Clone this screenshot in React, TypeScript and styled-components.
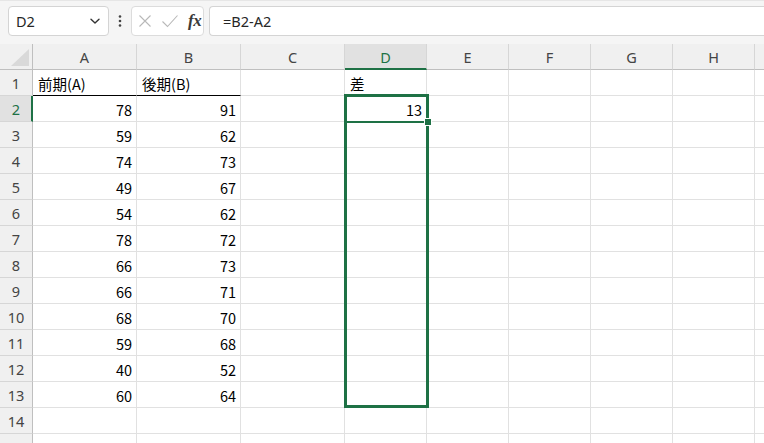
import React from "react";
import styled, { createGlobalStyle } from "styled-components";

const GREEN = "#1e7145";

const GlobalStyle = createGlobalStyle`
  html, body {
    margin: 0;
    padding: 0;
    background: #ffffff;
    overflow: hidden;
  }
  body {
    font-family: "Noto Sans", "Noto Sans CJK JP", sans-serif;
  }
`;

const columns = [
  { name: "A", width: 104 },
  { name: "B", width: 104 },
  { name: "C", width: 104 },
  { name: "D", width: 82 },
  { name: "E", width: 82 },
  { name: "F", width: 82 },
  { name: "G", width: 82 },
  { name: "H", width: 82 },
  { name: "", width: 40 },
];

const data: [string, string][] = [
  ["78", "91"],
  ["59", "62"],
  ["74", "73"],
  ["49", "67"],
  ["54", "62"],
  ["78", "72"],
  ["66", "73"],
  ["66", "71"],
  ["68", "70"],
  ["59", "68"],
  ["40", "52"],
  ["60", "64"],
];

const Page = styled.div`
  width: 764px;
  height: 443px;
  overflow: hidden;
  display: flex;
  flex-direction: column;
`;

const Toolbar = styled.div`
  height: 44px;
  box-sizing: border-box;
  background: #f5f5f5;
  border-top: 1px solid #e6e6e6;
  display: flex;
  align-items: flex-start;
  padding: 5px 0 0 8px;
  gap: 0;
`;

const NameBox = styled.div`
  width: 101px;
  height: 30px;
  box-sizing: border-box;
  background: #fff;
  border: 1px solid #d4d4d4;
  border-radius: 4px;
  display: flex;
  align-items: center;
  justify-content: space-between;
  padding: 0 6px 0 7px;
  font-size: 14.5px;
  color: #262626;
`;

const Dots = styled.div`
  width: 22px;
  height: 30px;
  display: flex;
  align-items: center;
  justify-content: center;
`;

const FuncBox = styled.div`
  width: 73px;
  height: 30px;
  box-sizing: border-box;
  background: #fff;
  border: 1px solid #dcdcdc;
  border-radius: 4px;
  display: flex;
  align-items: center;
  padding: 0 0 0 5px;
  gap: 8px;
`;

const Fx = styled.span`
  font-family: "Liberation Serif", "DejaVu Serif", serif;
  font-style: italic;
  font-weight: bold;
  font-size: 17px;
  color: #3a3a3a;
  margin-left: 1px;
  letter-spacing: -0.5px;
`;

const FormulaBar = styled.div`
  flex: 1;
  height: 30px;
  box-sizing: border-box;
  margin-left: 5px;
  background: #fff;
  border: 1px solid #d4d4d4;
  border-right: none;
  border-radius: 4px 0 0 4px;
  display: flex;
  align-items: center;
  padding-left: 13px;
  font-size: 14.5px;
  color: #262626;
`;

const Sheet = styled.div`
  position: relative;
  flex: 1;
  overflow: hidden;
  display: grid;
  grid-template-columns: 33px ${columns.map((c) => c.width + "px").join(" ")};
  grid-template-rows: 26px;
  grid-auto-rows: 26px;
`;

const Corner = styled.div`
  position: relative;
  background: #f0f0f0;
  box-sizing: border-box;
  border-right: 1px solid #bfbfbf;
  border-bottom: 1px solid #bfbfbf;
  &::after {
    content: "";
    position: absolute;
    right: 3px;
    bottom: 3px;
    width: 0;
    height: 0;
    border-left: 18px solid transparent;
    border-bottom: 17px solid #d9d9d9;
  }
`;

const ColHead = styled.div<{ $active?: boolean }>`
  background: ${(p) => (p.$active ? "#e1e1e1" : "#f0f0f0")};
  box-sizing: border-box;
  border-right: 1px solid #d6d6d6;
  border-bottom: ${(p) => (p.$active ? `2px solid ${GREEN}` : "1px solid #bfbfbf")};
  display: flex;
  align-items: center;
  justify-content: center;
  font-size: 14.5px;
  color: ${(p) => (p.$active ? GREEN : "#444")};
  padding-top: ${(p) => (p.$active ? "1px" : "0")};
`;

const RowHead = styled.div<{ $active?: boolean }>`
  background: ${(p) => (p.$active ? "#e1e1e1" : "#f0f0f0")};
  box-sizing: border-box;
  border-right: ${(p) => (p.$active ? `2px solid ${GREEN}` : "1px solid #bfbfbf")};
  border-bottom: 1px solid #d6d6d6;
  display: flex;
  align-items: center;
  justify-content: center;
  font-size: 14.5px;
  color: ${(p) => (p.$active ? GREEN : "#444")};
  padding-left: ${(p) => (p.$active ? "1px" : "0")};
`;

const Cell = styled.div<{ $right?: boolean; $underline?: boolean }>`
  box-sizing: border-box;
  border-right: 1px solid #e1e1e1;
  border-bottom: 1px solid ${(p) => (p.$underline ? "#000" : "#e1e1e1")};
  display: flex;
  align-items: center;
  justify-content: ${(p) => (p.$right ? "flex-end" : "flex-start")};
  padding: 1px 4px 0 5px;
  font-family: "Noto Sans CJK JP", "Noto Sans", sans-serif;
  font-size: 14.5px;
  color: #000;
  white-space: nowrap;
`;

const Selection = styled.div`
  position: absolute;
  left: 344px;
  top: 50px;
  width: 85px;
  height: 314px;
  box-sizing: border-box;
  border: 3px solid ${GREEN};
  pointer-events: none;
`;

const ActiveLine = styled.div`
  position: absolute;
  left: 344px;
  top: 77px;
  width: 85px;
  height: 2px;
  background: ${GREEN};
`;

const FillHandle = styled.div`
  position: absolute;
  left: 424px;
  top: 74px;
  width: 6px;
  height: 6px;
  background: ${GREEN};
  border: 1px solid #fff;
`;

const ChevronDown = () => (
  <svg width="14" height="14" viewBox="0 0 14 14" fill="none">
    <path d="M3 5.2 L7 9 L11 5.2" stroke="#333" strokeWidth="1.4" strokeLinecap="round" strokeLinejoin="round" />
  </svg>
);

const VDots = () => (
  <svg width="4" height="14" viewBox="0 0 4 14">
    <circle cx="2" cy="2.5" r="1.3" fill="#444" />
    <circle cx="2" cy="7" r="1.3" fill="#444" />
    <circle cx="2" cy="11.5" r="1.3" fill="#444" />
  </svg>
);

const CrossIcon = () => (
  <svg width="16" height="16" viewBox="0 0 16 16" fill="none">
    <path d="M2.5 2.5 L13.5 13.5 M13.5 2.5 L2.5 13.5" stroke="#b8b8b8" strokeWidth="1.1" />
  </svg>
);

const CheckIcon = () => (
  <svg width="18" height="16" viewBox="0 0 18 16" fill="none">
    <path d="M1.5 8.5 L6.5 13.5 L16.5 2.5" stroke="#b8b8b8" strokeWidth="1.1" />
  </svg>
);

const ROWS = 15;

export default function App() {
  const rows = [];
  for (let r = 1; r <= ROWS; r++) {
    const values: string[] = columns.map(() => "");
    if (r === 1) {
      values[0] = "前期(A)";
      values[1] = "後期(B)";
      values[3] = "差";
    } else if (r - 2 < data.length) {
      values[0] = data[r - 2][0];
      values[1] = data[r - 2][1];
      if (r === 2) values[3] = "13";
    }
    rows.push(
      <React.Fragment key={r}>
        <RowHead $active={r === 2}>{r}</RowHead>
        {columns.map((c, i) => (
          <Cell key={c.name + i} $right={r > 1} $underline={r === 1 && i < 2}>
            {values[i]}
          </Cell>
        ))}
      </React.Fragment>
    );
  }

  return (
    <Page>
      <GlobalStyle />
      <Toolbar>
        <NameBox>
          <span>D2</span>
          <ChevronDown />
        </NameBox>
        <Dots>
          <VDots />
        </Dots>
        <FuncBox>
          <CrossIcon />
          <CheckIcon />
          <Fx>fx</Fx>
        </FuncBox>
        <FormulaBar>=B2-A2</FormulaBar>
      </Toolbar>
      <Sheet>
        <Corner />
        {columns.map((c, i) => (
          <ColHead key={c.name + i} $active={c.name === "D"}>
            {c.name}
          </ColHead>
        ))}
        {rows}
        <Selection />
        <ActiveLine />
        <FillHandle />
      </Sheet>
    </Page>
  );
}
